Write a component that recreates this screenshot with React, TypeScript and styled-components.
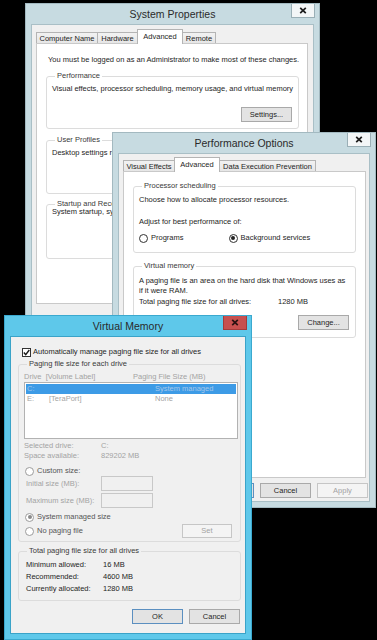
import React from "react";
import styled, { createGlobalStyle } from "styled-components";

const GlobalStyle = createGlobalStyle`
  html, body {
    margin: 0;
    padding: 0;
    background: #000;
  }
  * {
    box-sizing: border-box;
  }
  body {
    font-family: "Liberation Sans", Arial, sans-serif;
    font-size: 7.5px;
    line-height: 10px;
    color: #1e1e1e;
  }
`;

const Desktop = styled.div`
  position: relative;
  width: 377px;
  height: 640px;
  overflow: hidden;
  background: #000;
`;

const Frame = styled.div<{ $x: number; $y: number; $w: number; $h: number; $active?: boolean }>`
  position: absolute;
  left: ${(p) => p.$x}px;
  top: ${(p) => p.$y}px;
  width: ${(p) => p.$w}px;
  height: ${(p) => p.$h}px;
  display: flex;
  flex-direction: column;
  padding: 0 5px 5px;
  background: ${(p) => (p.$active ? "#5ec8ea" : "#c7dbe1")};
  border: 1px solid ${(p) => (p.$active ? "#3ba9cf" : "#a3b9c0")};
`;

const TitleBar = styled.div`
  position: relative;
  flex: none;
  height: 20px;
  display: flex;
  align-items: center;
  justify-content: center;
  font-size: 10.5px;
  color: #2a2a2a;
`;

const CloseButton = styled.div<{ $active?: boolean }>`
  position: absolute;
  top: 0;
  right: -1px;
  width: 24px;
  height: 14px;
  display: flex;
  align-items: center;
  justify-content: center;
  background: ${(p) => (p.$active ? "#c7504f" : "#f3f6f7")};
  border: 1px solid ${(p) => (p.$active ? "#a33b3a" : "#9aafb6")};
  border-top: none;
`;

const Client = styled.div<{ $pad: string; $active?: boolean }>`
  flex: 1;
  display: flex;
  flex-direction: column;
  padding: ${(p) => p.$pad};
  background: #f0f0f0;
  border: 1px solid ${(p) => (p.$active ? "#3aa3c8" : "#a9bfc6")};
`;

const TabStrip = styled.div`
  display: flex;
  align-items: flex-end;
  height: 15px;
  margin-bottom: -1px;
`;

const Tab = styled.div<{ $w: number; $selected?: boolean }>`
  position: relative;
  z-index: ${(p) => (p.$selected ? 1 : 0)};
  width: ${(p) => p.$w}px;
  height: ${(p) => (p.$selected ? 15 : 11)}px;
  margin-bottom: ${(p) => (p.$selected ? 0 : 1)}px;
  margin-right: -1px;
  display: flex;
  align-items: center;
  justify-content: center;
  white-space: nowrap;
  background: ${(p) => (p.$selected ? "#fff" : "linear-gradient(#f2f2f2, #e6e6e6)")};
  border: 1px solid #b4b4b4;
  border-bottom: none;
  padding-top: ${(p) => (p.$selected ? 0 : 1)}px;
`;

const TabPanel = styled.div<{ $w: number; $h: number; $pad: string }>`
  width: ${(p) => p.$w}px;
  height: ${(p) => p.$h}px;
  display: flex;
  flex-direction: column;
  padding: ${(p) => p.$pad};
  background: #fff;
  border: 1px solid #c9c9c9;
`;

const Group = styled.fieldset<{ $h?: number; $mt?: number; $pb?: number }>`
  margin: ${(p) => p.$mt ?? 0}px 0 0;
  padding: 0 6px ${(p) => p.$pb ?? 0}px 5px;
  min-width: 0;
  height: ${(p) => (p.$h ? `${p.$h}px` : "auto")};
  display: flex;
  flex-direction: column;
  border: 1px solid #dcdcdc;
  border-radius: 3px;
`;

const Legend = styled.legend`
  margin-left: 3px;
  padding: 0 2px;
  line-height: 10px;
  color: #3a3a3a;
`;

const Text = styled.div<{ $mt?: number; $ml?: number; $color?: string }>`
  margin-top: ${(p) => p.$mt ?? 0}px;
  margin-left: ${(p) => p.$ml ?? 0}px;
  color: ${(p) => p.$color ?? "inherit"};
  white-space: nowrap;
`;

const Paragraph = styled.div<{ $mt?: number }>`
  margin-top: ${(p) => p.$mt ?? 0}px;
`;

const Button = styled.div<{ $w?: number; $h?: number; $disabled?: boolean; $default?: boolean; $mt?: number }>`
  width: ${(p) => p.$w ?? 51}px;
  height: ${(p) => p.$h ?? 15}px;
  margin-top: ${(p) => p.$mt ?? 0}px;
  display: flex;
  align-items: center;
  justify-content: center;
  flex: none;
  align-self: flex-end;
  color: ${(p) => (p.$disabled ? "#a3a3a3" : "#1e1e1e")};
  background: ${(p) => (p.$disabled ? "#f4f4f4" : "#e3e3e3")};
  border: 1px solid ${(p) => (p.$disabled ? "#c6c6c6" : p.$default ? "#5b8fc0" : "#a9a9a9")};
`;

const ButtonRow = styled.div<{ $mt: number; $mr: number }>`
  display: flex;
  justify-content: flex-end;
  gap: 6px;
  margin-top: ${(p) => p.$mt}px;
  margin-right: ${(p) => p.$mr}px;
`;

const RadioRow = styled.div<{ $mt?: number }>`
  display: flex;
  gap: 45px;
  margin-top: ${(p) => p.$mt ?? 0}px;
`;

const RadioItem = styled.label<{ $color?: string; $ml?: number }>`
  display: flex;
  align-items: center;
  gap: 3px;
  height: 10px;
  margin-left: ${(p) => p.$ml ?? 0}px;
  color: ${(p) => p.$color ?? "inherit"};
  white-space: nowrap;
`;

const RadioCircle = styled.span<{ $checked?: boolean; $dim?: boolean }>`
  width: 9px;
  height: 9px;
  flex: none;
  display: flex;
  align-items: center;
  justify-content: center;
  border-radius: 50%;
  background: #fff;
  border: 1px solid ${(p) => (p.$dim ? "#9c9c9c" : "#333")};
  &::after {
    content: "";
    width: 4px;
    height: 4px;
    border-radius: 50%;
    background: ${(p) => (p.$checked ? (p.$dim ? "#8a8a8a" : "#222") : "transparent")};
  }
`;

const ValueRow = styled.div<{ $col: number; $mt?: number; $lh?: number; $ml?: number; $color?: string }>`
  display: grid;
  grid-template-columns: ${(p) => p.$col}px auto;
  justify-content: start;
  margin-top: ${(p) => p.$mt ?? 0}px;
  margin-left: ${(p) => p.$ml ?? 0}px;
  line-height: ${(p) => p.$lh ?? 10}px;
  color: ${(p) => p.$color ?? "inherit"};
  white-space: nowrap;
`;

const CheckRow = styled.div`
  display: flex;
  align-items: center;
  gap: 2px;
  height: 10px;
  margin-left: 4px;
  white-space: nowrap;
`;

const CheckBox = styled.span`
  width: 9px;
  height: 9px;
  display: flex;
  align-items: center;
  justify-content: center;
  background: #fff;
  border: 1px solid #333;
`;

const ListBox = styled.div`
  width: 214px;
  height: 57px;
  padding: 1px;
  background: #fff;
  border: 1px solid #b2b2b2;
  color: #a3a3a3;
`;

const ListRow = styled.div<{ $selected?: boolean }>`
  display: grid;
  grid-template-columns: 22px 106px auto;
  height: 10px;
  padding-left: 1px;
  background: ${(p) => (p.$selected ? "#3d9be6" : "transparent")};
  color: ${(p) => (p.$selected ? "#a6c7ea" : "inherit")};
  white-space: nowrap;
`;

const SizeRow = styled.div<{ $mt?: number }>`
  display: grid;
  grid-template-columns: 75px 52px;
  align-items: center;
  margin-top: ${(p) => p.$mt ?? 0}px;
  margin-left: 2px;
  color: #a3a3a3;
`;

const SizeInput = styled.div`
  height: 15px;
  background: #f0f0f0;
  border: 1px solid #c8c8c8;
`;

const RadioLine = styled.div<{ $mt?: number }>`
  margin-top: ${(p) => p.$mt ?? 0}px;
`;

const SplitRow = styled.div<{ $mt?: number }>`
  display: flex;
  align-items: center;
  justify-content: space-between;
  margin-top: ${(p) => p.$mt ?? 0}px;
  margin-right: 2px;
`;

const CloseGlyph = ({ dark }: { dark?: boolean }) => (
  <svg width="8" height="7" viewBox="0 0 8 7">
    <path d="M1.2 0.8 L6.8 6.2 M6.8 0.8 L1.2 6.2" stroke={dark ? "#2b1111" : "#1d1d1d"} strokeWidth="1.7" />
  </svg>
);

type WindowProps = {
  x: number;
  y: number;
  w: number;
  h: number;
  title: string;
  active?: boolean;
  children: React.ReactNode;
};

function Window({ x, y, w, h, title, active, children }: WindowProps) {
  return (
    <Frame $x={x} $y={y} $w={w} $h={h} $active={active}>
      <TitleBar>
        {title}
        <CloseButton $active={active}>
          <CloseGlyph dark={active} />
        </CloseButton>
      </TitleBar>
      {children}
    </Frame>
  );
}

const Radio = ({
  label,
  checked,
  dim,
  color,
  ml,
}: {
  label: string;
  checked?: boolean;
  dim?: boolean;
  color?: string;
  ml?: number;
}) => (
  <RadioItem $color={color} $ml={ml}>
    <RadioCircle $checked={checked} $dim={dim} />
    {label}
  </RadioItem>
);

export default function App() {
  return (
    <>
      <GlobalStyle />
      <Desktop>
        <Window x={25} y={3} w={295} h={440} title="System Properties">
          <Client $pad="4px 0 0 4px">
            <TabStrip>
              <Tab $w={62}>Computer Name</Tab>
              <Tab $w={41}>Hardware</Tab>
              <Tab $w={46} $selected>
                Advanced
              </Tab>
              <Tab $w={34}>Remote</Tab>
            </TabStrip>
            <TabPanel $w={272} $h={261} $pad="11px 8px 0 9px">
              <Text $ml={2}>You must be logged on as an Administrator to make most of these changes.</Text>
              <Group $h={58} $mt={6}>
                <Legend>Performance</Legend>
                <Text $mt={3}>Visual effects, processor scheduling, memory usage, and virtual memory</Text>
                <Button $mt={13}>Settings...</Button>
              </Group>
              <Group $h={59} $mt={6}>
                <Legend>User Profiles</Legend>
                <Text $mt={3}>Desktop settings related to your sign-in</Text>
              </Group>
              <Group $h={60} $mt={5}>
                <Legend>Startup and Recovery</Legend>
                <Text $mt={-2}>System startup, system failure, and debugging information</Text>
              </Group>
            </TabPanel>
          </Client>
        </Window>

        <Window x={112} y={132} w={264} h={376} title="Performance Options">
          <Client $pad="3px 0 0 4px">
            <TabStrip>
              <Tab $w={52}>Visual Effects</Tab>
              <Tab $w={46} $selected>
                Advanced
              </Tab>
              <Tab $w={97}>Data Execution Prevention</Tab>
            </TabStrip>
            <TabPanel $w={243} $h={307} $pad="9px 9px 0 9px">
              <Group $h={72}>
                <Legend>Processor scheduling</Legend>
                <Text $mt={4}>Choose how to allocate processor resources.</Text>
                <Text $mt={12}>Adjust for best performance of:</Text>
                <RadioRow $mt={6}>
                  <Radio label="Programs" />
                  <Radio label="Background services" checked />
                </RadioRow>
              </Group>
              <Group $h={77} $mt={8}>
                <Legend>Virtual memory</Legend>
                <Paragraph $mt={5}>
                  A paging file is an area on the hard disk that Windows uses as
                  <br />
                  if it were RAM.
                </Paragraph>
                <ValueRow $col={139} $mt={1}>
                  <span>Total paging file size for all drives:</span>
                  <span>1280 MB</span>
                </ValueRow>
                <Button $mt={8}>Change...</Button>
              </Group>
            </TabPanel>
            <ButtonRow $mt={5} $mr={1}>
              <Button $default>OK</Button>
              <Button>Cancel</Button>
              <Button $disabled>Apply</Button>
            </ButtonRow>
          </Client>
        </Window>

        <Window x={4} y={315} w={248} h={325} title="Virtual Memory" active>
          <Client $pad="10px 4px 0 7px" $active>
            <CheckRow>
              <CheckBox>
                <svg width="7" height="7" viewBox="0 0 7 7">
                  <path d="M0.8 3.6 L2.7 5.6 L6.3 1" stroke="#1a1a1a" strokeWidth="1.4" fill="none" />
                </svg>
              </CheckBox>
              Automatically manage paging file size for all drives
            </CheckRow>
            <Group $mt={2} $pb={3}>
              <Legend>Paging file size for each drive</Legend>
              <ValueRow $col={109} $mt={3} $color="#a3a3a3">
                <span>Drive&nbsp; [Volume Label]</span>
                <span>Paging File Size (MB)</span>
              </ValueRow>
              <ListBox>
                <ListRow $selected>
                  <span>C:</span>
                  <span />
                  <span>System managed</span>
                </ListRow>
                <ListRow>
                  <span>E:</span>
                  <span>[TeraPort]</span>
                  <span>None</span>
                </ListRow>
              </ListBox>
              <ValueRow $col={77} $mt={2} $color="#a3a3a3">
                <span>Selected drive:</span>
                <span>C:</span>
                <span>Space available:</span>
                <span>829202 MB</span>
              </ValueRow>
              <RadioLine $mt={5}>
                <Radio label="Custom size:" dim color="#555" ml={1} />
              </RadioLine>
              <SizeRow>
                <span>Initial size (MB):</span>
                <SizeInput />
              </SizeRow>
              <SizeRow $mt={2}>
                <span>Maximum size (MB):</span>
                <SizeInput />
              </SizeRow>
              <RadioLine $mt={4}>
                <Radio label="System managed size" checked dim color="#555" ml={1} />
              </RadioLine>
              <SplitRow $mt={2}>
                <Radio label="No paging file" dim color="#555" ml={1} />
                <Button $w={50} $h={14} $disabled>
                  Set
                </Button>
              </SplitRow>
            </Group>
            <Group $mt={4} $pb={5}>
              <Legend>Total paging file size for all drives</Legend>
              <ValueRow $col={77} $mt={3} $lh={12} $ml={2}>
                <span>Minimum allowed:</span>
                <span>16 MB</span>
                <span>Recommended:</span>
                <span>4600 MB</span>
                <span>Currently allocated:</span>
                <span>1280 MB</span>
              </ValueRow>
            </Group>
            <ButtonRow $mt={8} $mr={1}>
              <Button $default>OK</Button>
              <Button>Cancel</Button>
            </ButtonRow>
          </Client>
        </Window>
      </Desktop>
    </>
  );
}
